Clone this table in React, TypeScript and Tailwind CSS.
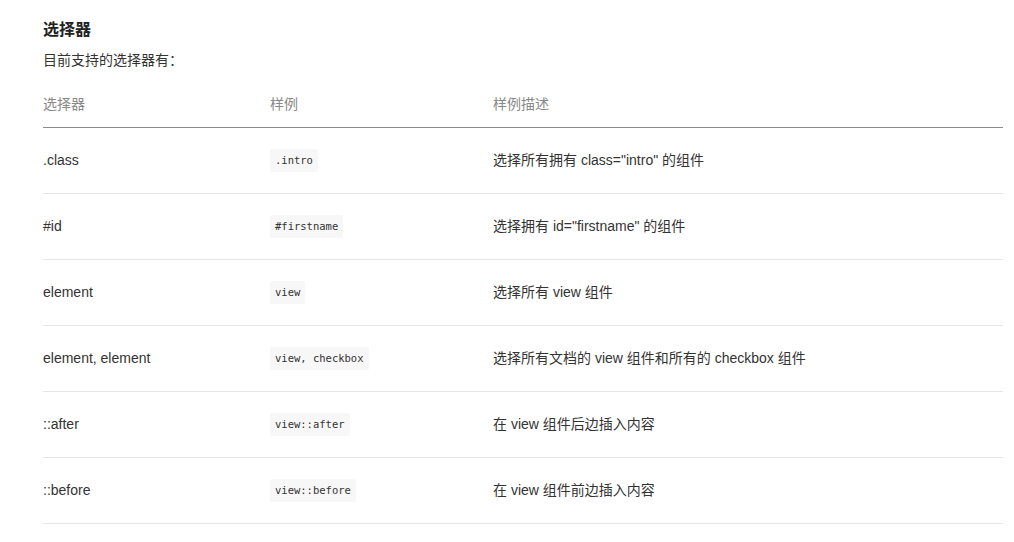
const rows = [
  { selector: '.class', sample: '.intro', desc: '选择所有拥有 class="intro" 的组件' },
  { selector: '#id', sample: '#firstname', desc: '选择拥有 id="firstname" 的组件' },
  { selector: 'element', sample: 'view', desc: '选择所有 view 组件' },
  { selector: 'element, element', sample: 'view, checkbox', desc: '选择所有文档的 view 组件和所有的 checkbox 组件' },
  { selector: '::after', sample: 'view::after', desc: '在 view 组件后边插入内容' },
  { selector: '::before', sample: 'view::before', desc: '在 view 组件前边插入内容' },
];

export default function App() {
  return (
    <div className="min-h-[542px] bg-white px-[43px] pt-[18px] font-['Liberation_Sans','Noto_Sans_CJK_SC',sans-serif] text-[#333]">
      <h2 className="text-[16px] leading-[24px] font-bold text-[#222]">选择器</h2>
      <p className="mt-[7px] text-[14px] leading-[22px]">目前支持的选择器有：</p>
      <table className="mt-[12px] w-[960px] table-fixed border-collapse text-[14px]">
        <thead>
          <tr className="border-b border-[#8a8a8a]">
            <th className="h-[44px] w-[227px] text-left font-normal text-[#888]">选择器</th>
            <th className="w-[223px] text-left font-normal text-[#888]">样例</th>
            <th className="text-left font-normal text-[#888]">样例描述</th>
          </tr>
        </thead>
        <tbody>
          {rows.map((row) => (
            <tr key={row.selector} className="border-b border-[#e6e6e6]">
              <td className="h-[66px]">{row.selector}</td>
              <td>
                <code className="inline-block rounded-[2px] bg-[#f7f7f7] px-[5px] py-[5px] font-['DejaVu_Sans_Mono',monospace] text-[10.5px] leading-[13px] text-[#333]">
                  {row.sample}
                </code>
              </td>
              <td>{row.desc}</td>
            </tr>
          ))}
        </tbody>
      </table>
    </div>
  );
}
